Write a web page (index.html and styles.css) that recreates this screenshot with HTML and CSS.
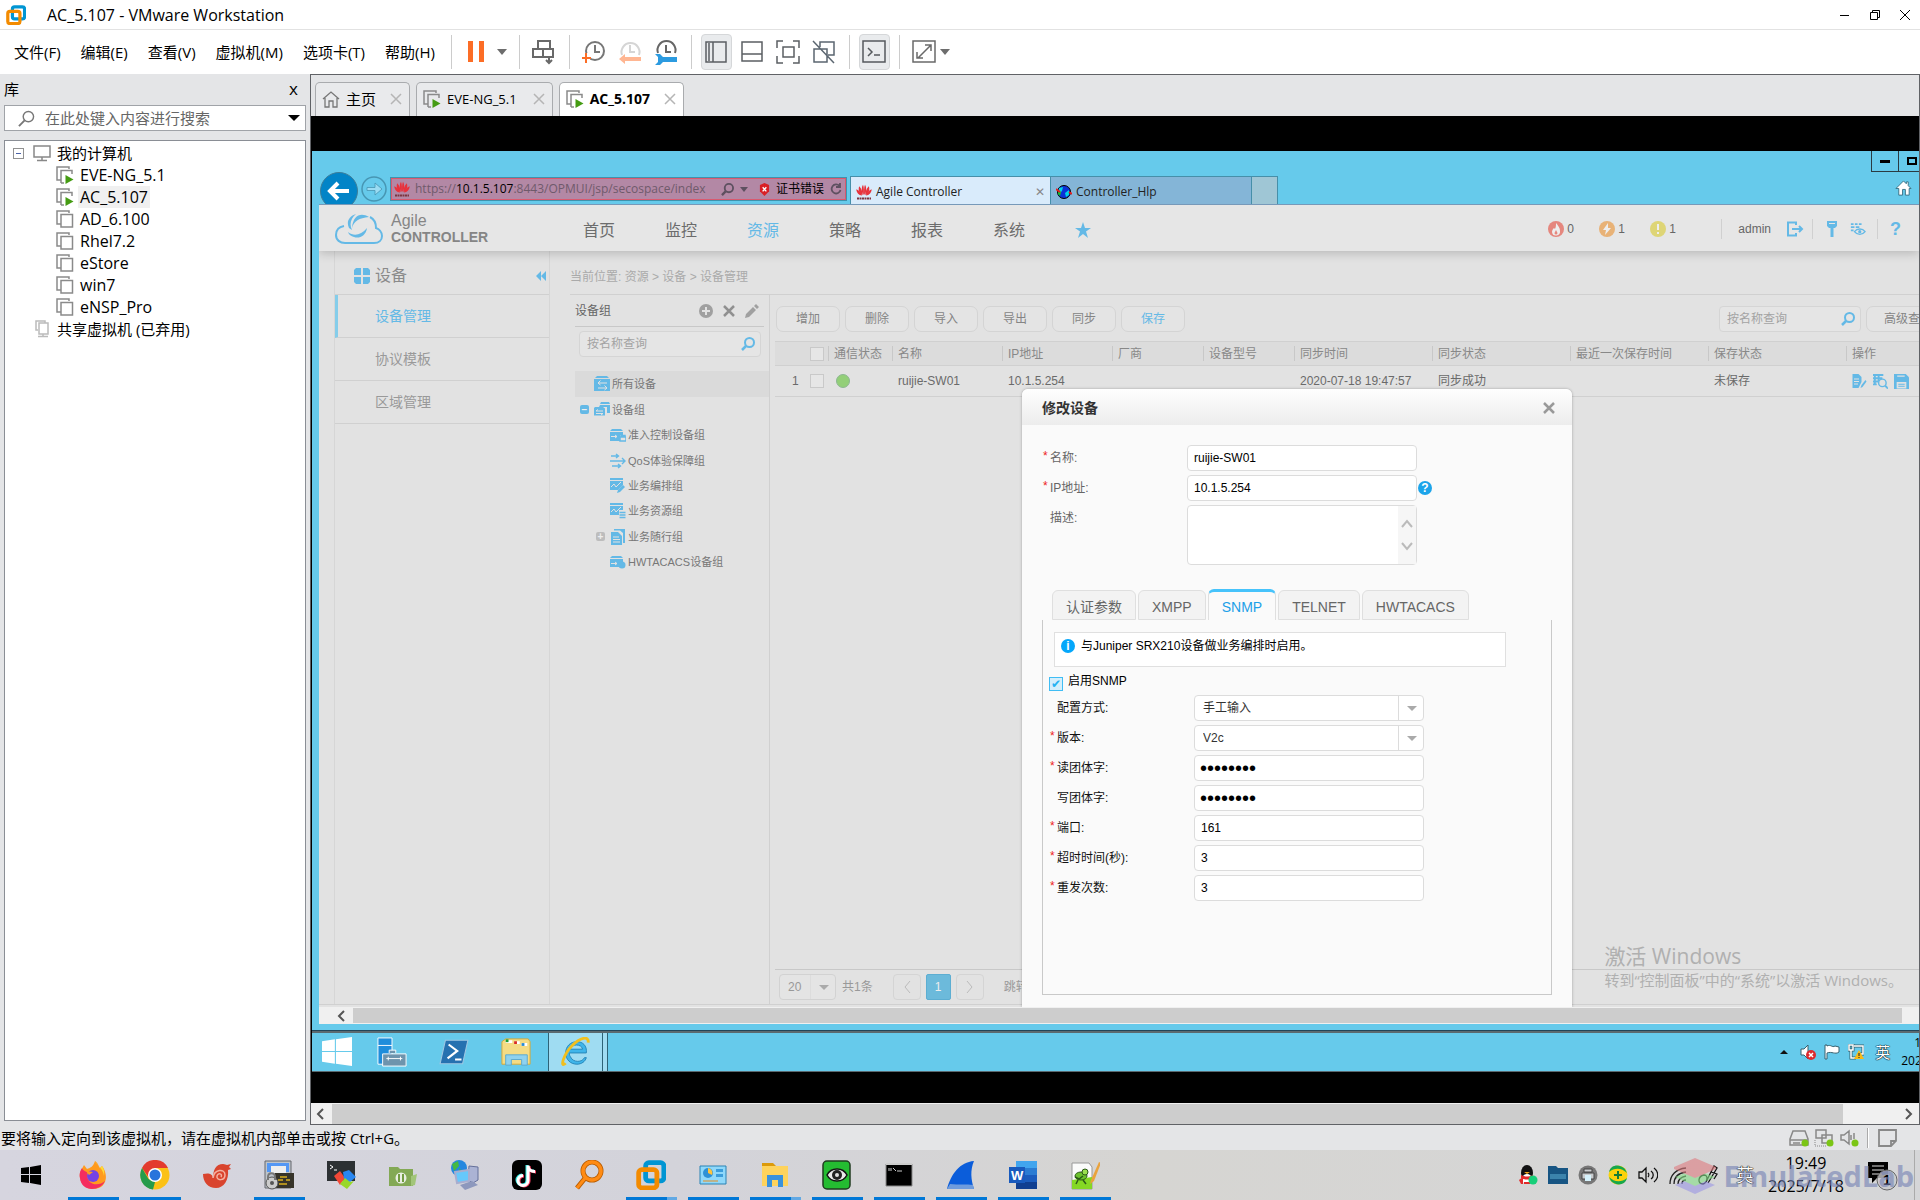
FILE: index.html
```
<!DOCTYPE html>
<html lang="zh-CN">
<head>
    <meta charset="utf-8">
    <title>AC_5.107 - VMware Workstation</title>
    <link rel="stylesheet" href="styles.css">
</head>
<body>

<!-- shared icons -->
<svg class="sprite" aria-hidden="true">
    <symbol id="vm" viewBox="0 0 18 18"><path d="M5 14H1V1h12v2" fill="none" stroke="#8a8a8a" stroke-width="1.5"/><rect x="5" y="4.500" width="11.500" height="12.500" fill="#fff" stroke="#8a8a8a" stroke-width="1.500"/></symbol>
    <symbol id="vm-on" viewBox="0 0 18 18"><path d="M5 14H1V1h12v2M5 17V4.500h11V8M5 17h3" fill="none" stroke="#8a8a8a" stroke-width="1.5"/><path d="M9.500 9v9l8-4.500z" fill="#459c13"/></symbol>
    <symbol id="vmware" viewBox="0 0 28 28"><rect x="9" y="2.500" width="17" height="17" rx="3" fill="none" stroke="#0095d3" stroke-width="4.500"/><rect x="2.500" y="9" width="17" height="17" rx="3" fill="none" stroke="#f38b00" stroke-width="4.500"/></symbol>
    <symbol id="search" viewBox="0 0 14 14"><circle cx="8.500" cy="5.500" r="4.500" fill="none" stroke="currentColor" stroke-width="2"/><path d="M5 9l-4 4" stroke="currentColor" stroke-width="2.500"/></symbol>
    <symbol id="huawei" viewBox="0 0 16 16"><g fill="#e8323c"><path d="M7.700 11C5 8 5.500 3 7 .8 8 3 8.200 8 7.700 11zM8.300 11C11 8 10.500 3 9 .8 8 3 7.800 8 8.300 11z"/><path d="M6.800 11C3 9 2 5.500 3.200 2.200 5.300 4 6.700 8 6.800 11zM9.200 11C13 9 14 5.500 12.800 2.200 10.700 4 9.300 8 9.200 11z"/><path d="M6.200 11.500C2.500 11.500.5 8.500.3 5.300 3 6 5.500 9 6.200 11.500zM9.800 11.500c3.700 0 5.700-3 5.900-6.200C13 6 10.500 9 9.800 11.500z"/></g><path d="M1 14.500h14" stroke="#7d3440" stroke-width="2" stroke-dasharray="2 .5"/></symbol>
    <symbol id="dev" viewBox="0 0 16 16"><path d="M3 0h10l2 2H1z" fill="#64b9e6"/><path d="M0 3h16v12H0z" fill="#64b9e6"/><path d="M13 7H4l2.500-2.500M4 7l2.500 2M4 12h9l-2.500-2.500M13 12l-2.500 2" stroke="#e2e2e2" fill="none"/></symbol>
    <symbol id="devs" viewBox="0 0 16 16"><path d="M7 0h8l1 2H6zM6 3h10v8h-3V5H5z" fill="#64b9e6"/><path d="M1 5h8l2 1.500v7H0V6z" fill="#64b9e6"/><path d="M9 9H2l2-1.500M2 11.500h7L7 13" stroke="#e2e2e2" fill="none"/></symbol>
    <symbol id="lock" viewBox="0 0 16 16"><path d="M2 2h9l2 2H0zM0 5h13v3h-3v6H0z" fill="#64b9e6"/><path d="M1 9.500h6L5 8M7 9.500L5 11" stroke="#e2e2e2" fill="none"/><path d="M11 10V8.500h4V10M10 10h6v4h-6z" fill="none" stroke="#64b9e6" stroke-width="1.500"/></symbol>
    <symbol id="qos" viewBox="0 0 16 16"><path d="M1 3h7M6 1l2.500 2L6 5M0 8h15M12 5l3 3-3 3M2 13h8M8 11l2.500 2L8 15" stroke="#64b9e6" stroke-width="1.400" fill="none"/></symbol>
    <symbol id="edit-chart" viewBox="0 0 16 16"><path d="M0 0h13v2H0zM0 3h13v4l-5 5H0z" fill="#64b9e6"/><path d="M1 9l3-3 2 3 5-5" stroke="#e2e2e2" fill="none"/><path d="M7 15l1-3 5-5 2 2-5 5z" fill="#64b9e6"/></symbol>
    <symbol id="db-chart" viewBox="0 0 16 16"><path d="M0 0h13v2H0zM0 3h13v4H9v5H0z" fill="#64b9e6"/><path d="M1 9l3-3 2 3 5-5" stroke="#e2e2e2" fill="none"/><path d="M9.500 9.500h6M9.500 12h6M9.500 14.500h6" stroke="#64b9e6" stroke-width="1.500"/></symbol>
    <symbol id="docs" viewBox="0 0 16 16"><path d="M4 0h11v14h-2V4L10 1.500H4z" fill="#64b9e6"/><path d="M1 3h7l4 4v9H1z" fill="#64b9e6"/><path d="M3 8h6M3 10.500h7M3 13h7" stroke="#e2e2e2"/></symbol>
    <symbol id="tacacs" viewBox="0 0 16 16"><path d="M2 2h9l2 2H0zM0 5h13v3a4 4 0 0 0-4 5H0z" fill="#64b9e6"/><path d="M1 9.500h6L5 8M7 9.500L5 11" stroke="#e2e2e2" fill="none"/><circle cx="12" cy="11" r="3.500" fill="#64b9e6"/></symbol>
</svg>

<header class="title-bar">
    <svg class="app-logo"><use href="#vmware"/></svg>
    <h1 class="app-title">AC_5.107 - VMware Workstation</h1>
    <div class="window-buttons">
        <button aria-label="最小化"><svg viewBox="0 0 12 12"><path d="M1 6.500h9"/></svg></button>
        <button aria-label="还原"><svg viewBox="0 0 12 12"><path d="M1.500 3.500h7v7h-7zM3.500 3.500v-2h7v7h-2"/></svg></button>
        <button aria-label="关闭"><svg viewBox="0 0 12 12"><path d="M1 1l10 10M11 1L1 11"/></svg></button>
    </div>
</header>

<nav class="menu-bar">
    <button class="menu">文件(F)</button>
    <button class="menu">编辑(E)</button>
    <button class="menu">查看(V)</button>
    <button class="menu">虚拟机(M)</button>
    <button class="menu">选项卡(T)</button>
    <button class="menu">帮助(H)</button>
    <span class="bar-line"></span>
    <div class="tool-group pause">
        <button aria-label="挂起"><svg viewBox="0 0 26 26"><path d="M5 2h5v21H5zM16 2h5v21h-5z" fill="#fc6d26"/></svg></button>
        <span class="caret"></span>
    </div>
    <span class="bar-line"></span>
    <div class="tool-group">
        <button aria-label="发送按键"><svg viewBox="0 0 26 26"><path d="M7 2h12v8H7zM2 10h10v8H2zM12 10h10v8H12zM18 18v6M15 21l3 3 3-3" fill="none" stroke="#696969" stroke-width="2"/></svg></button>
    </div>
    <span class="bar-line"></span>
    <div class="tool-group snaps">
        <button aria-label="拍摄快照"><svg viewBox="0 0 26 26"><circle cx="14" cy="12" r="9" fill="none" stroke="#777" stroke-width="2"/><path d="M14 6v7h5" fill="none" stroke="#777" stroke-width="2"/><path d="M0 14h9v10H0z" fill="#fff"/><path d="M5 14v10M1 19h9" stroke="#fc6d26" stroke-width="2"/></svg></button>
        <button aria-label="恢复快照"><svg viewBox="0 0 26 26"><path d="M5 16a9 9 0 1 1 17 0M13 6v7h5" fill="none" stroke="#d5d5d5" stroke-width="2"/><path d="M2 20l6-5v3h16v4H8v3z" fill="#ffb692"/></svg></button>
        <button aria-label="管理快照"><svg viewBox="0 0 26 26"><path d="M5 14a9 9 0 1 1 17 0M13 6v7h5" fill="none" stroke="#666" stroke-width="2"/><path d="M2 15h5l3 3h14v5H10l-3 3H2l3-3v-5z" fill="#2c9be0"/></svg></button>
    </div>
    <span class="bar-line"></span>
    <div class="tool-group views">
        <button class="pressed" aria-label="显示库"><svg viewBox="0 0 26 26"><path d="M3 3h20v20H3zM10 3v20M6 4v18" fill="none" stroke="#5b5f63" stroke-width="1.500"/></svg></button>
        <button aria-label="缩略图栏"><svg viewBox="0 0 26 26"><path d="M3 3h20v19H3zM3 15h20" fill="none" stroke="#5b5f63" stroke-width="1.500"/></svg></button>
        <button aria-label="全屏"><svg viewBox="0 0 26 26"><path d="M8 8h11v10H8zM2 9V2h6M18 2h6v7M24 17v7h-6M8 24H2v-7" fill="none" stroke="#5b5f63" stroke-width="1.500"/></svg></button>
        <button aria-label="Unity"><svg viewBox="0 0 26 26"><path d="M9 8V3h14v13h-6M3 10h13v13H3zM2 2l21 22" fill="none" stroke="#5b6670" stroke-width="1.500"/></svg></button>
    </div>
    <span class="bar-line"></span>
    <div class="tool-group">
        <button class="pressed" aria-label="控制台"><svg viewBox="0 0 26 26"><path d="M2 2h22v21H2zM7 9l4 4-4 4M13 16h6" fill="none" stroke="#55595d" stroke-width="1.500"/></svg></button>
    </div>
    <span class="bar-line"></span>
    <div class="tool-group">
        <button aria-label="拉伸"><svg viewBox="0 0 26 26"><path d="M2 2h22v21H2zM7 19L20 6M14 6h6v6M6 13v6h6" fill="none" stroke="#696969" stroke-width="1.500"/></svg></button>
        <span class="caret"></span>
    </div>
</nav>

<main class="workspace">
    <aside class="library">
        <div class="library-head"><h2>库</h2><button aria-label="关闭">x</button></div>
        <div class="library-search">
            <svg class="search-icon" viewBox="0 0 18 18"><circle cx="11" cy="7" r="5.500" fill="none" stroke="#777" stroke-width="1.500"/><path d="M7 11l-6 6" stroke="#777" stroke-width="2"/></svg>
            <input type="text" aria-label="搜索" placeholder="在此处键入内容进行搜索">
            <span class="caret black"></span>
        </div>
        <ul class="vm-tree">
            <li class="root"><span class="minus-box"></span><svg viewBox="0 0 18 18"><path d="M1 2h16v11H1zM9 13v3M4 16.500h10" fill="none" stroke="#888" stroke-width="1.500"/></svg><span>我的计算机</span></li>
            <li><svg><use href="#vm-on"/></svg><span>EVE-NG_5.1</span></li>
            <li class="selected"><svg><use href="#vm-on"/></svg><span>AC_5.107</span></li>
            <li><svg><use href="#vm"/></svg><span>AD_6.100</span></li>
            <li><svg><use href="#vm"/></svg><span>Rhel7.2</span></li>
            <li><svg><use href="#vm"/></svg><span>eStore</span></li>
            <li><svg><use href="#vm"/></svg><span>win7</span></li>
            <li><svg><use href="#vm"/></svg><span>eNSP_Pro</span></li>
            <li class="shared"><svg viewBox="0 0 18 18"><path d="M5 10H3V1h9v2M6 3h9v11H6zM10 14v2M5 16.500h10" fill="none" stroke="#bbb" stroke-width="1.500"/></svg><span>共享虚拟机 (已弃用)</span></li>
        </ul>
    </aside>

    <section class="console">
        <div class="vm-tabs">
            <div class="vm-tab home"><svg viewBox="0 0 18 18"><path d="M1 9l8-7 8 7M3 8v9h4v-6h4v6h4V8" fill="none" stroke="#777" stroke-width="1.300"/></svg><span>主页</span><button aria-label="关闭"><svg class="x" viewBox="0 0 12 12"><path d="M1 1l10 10M11 1L1 11"/></svg></button></div>
            <div class="vm-tab"><svg><use href="#vm-on"/></svg><span>EVE-NG_5.1</span><button aria-label="关闭"><svg class="x" viewBox="0 0 12 12"><path d="M1 1l10 10M11 1L1 11"/></svg></button></div>
            <div class="vm-tab active"><svg><use href="#vm-on"/></svg><span>AC_5.107</span><button aria-label="关闭"><svg class="x" viewBox="0 0 12 12"><path d="M1 1l10 10M11 1L1 11"/></svg></button></div>
        </div>

        <div class="guest">
            <div class="ie">
                <div class="ie-buttons">
                    <button aria-label="最小化"><span class="ie-min"></span></button>
                    <button aria-label="最大化"><span class="ie-max"></span></button>
                </div>
                <div class="ie-bar">
                    <button class="ie-back" aria-label="后退"><svg viewBox="0 0 38 38"><circle cx="19" cy="19" r="18.500" fill="#0284c7" stroke="#3d7d99"/><path d="M29 19H11M18 11l-8 8 8 8" fill="none" stroke="#fff" stroke-width="4"/></svg></button>
                    <button class="ie-forward" aria-label="前进"><svg viewBox="0 0 26 26"><circle cx="13" cy="13" r="12" fill="none" stroke="#4796b3" stroke-width="1.500"/><path d="M6 11.500h8V7l7 6-7 6v-4.500H6z" fill="#9adcf3" stroke="#4796b3" stroke-width=".8"/></svg></button>
                    <div class="address">
                        <svg class="fav"><use href="#huawei"/></svg>
                        <span class="url">https://<b>10.1.5.107</b>:8443/OPMUI/jsp/secospace/index</span>
                        <svg class="address-search"><use href="#search"/></svg>
                        <span class="caret small"></span>
                        <svg class="shield" viewBox="0 0 12 14"><path d="M1 2l5-2 5 2v7l-5 5-5-5z" fill="#d91f26"/><path d="M4 4.500l4 4.500M8 4.500L4 9" stroke="#fff" stroke-width="1.500"/></svg>
                        <span class="cert">证书错误</span>
                        <svg class="reload" viewBox="0 0 12 12"><path d="M9.500 3A4.500 4.500 0 1 0 10.500 7M10 0v4H6" fill="none" stroke="#5e5060" stroke-width="1.800"/></svg>
                    </div>
                    <div class="ie-tab active"><svg class="fav"><use href="#huawei"/></svg><span>Agile Controller</span><button aria-label="关闭">✕</button></div>
                    <div class="ie-tab"><svg class="fav" viewBox="0 0 16 16"><circle cx="8" cy="8" r="6.500" fill="#0a32d8" stroke="#000"/><path d="M3 4l4-1-1 4-3 3zM9 9l4-3v5l-3 2z" fill="#00d4e8"/><path d="M2 6l3 2-1 4-2-2z" fill="#0bc22c"/><path d="M0 5l4 3M13 8l3 2" stroke="#e41d1d" stroke-width="2"/></svg><span>Controller_Hlp</span></div>
                    <div class="ie-newtab"></div>
                    <svg class="ie-home" viewBox="0 0 18 18"><path d="M1 9l8-8 3 3V2h2v4l3 3h-2v7h-4v-6H8v6H4V9z" fill="#fff" stroke="#3a7286"/></svg>
                </div>

                <div class="page">
                    <header class="ac-header">
                        <svg class="cloud" viewBox="0 0 48 32"><path d="M9 13C3 14 1 18 1 22c0 5 4 8 9 8h29c5 0 8-3 8-7s-3-7-6-8c0-5-2-9-6-11" fill="none" stroke="#64b9e6" stroke-width="2"/><path d="M34 4C26-1 18 2 17 15 19 8 24 5 34 4zM21 1c-7 2-10 8-7 14l3 2C14 11 16 5 21 1zM32 15c-1 8-8 11-13 9-3-1-5-2-6-5 6 5 13 3 19-4z" fill="#64b9e6"/></svg>
                        <div class="brand"><span class="brand-top">Agile</span><strong>CONTROLLER</strong></div>
                        <nav class="ac-nav">
                            <a href="#">首页</a><a href="#">监控</a><a href="#" class="on">资源</a><a href="#">策略</a><a href="#">报表</a><a href="#">系统</a>
                            <a href="#" aria-label="收藏"><svg viewBox="0 0 16 16"><path d="M8 0l2 6h6l-5 3.500L13 16l-5-4-5 4 2-6.500L0 6h6z" fill="#64b9e6"/></svg></a>
                        </nav>
                        <div class="alarms">
                            <span><svg viewBox="0 0 16 16"><circle cx="8" cy="8" r="8" fill="#e5877e"/><path d="M8 2c3 4 4 5 4 8a4 4 0 0 1-8 1c0-2 1-3 2-4l1 1c1-2 1-4 1-6z" fill="#eee"/><path d="M8 9l1.500 3a1.500 1.500 0 0 1-3 0z" fill="#e5877e"/></svg>0</span>
                            <span><svg viewBox="0 0 16 16"><circle cx="8" cy="8" r="8" fill="#e8b277"/><path d="M9 2L4 9h3l-1 5 6-7H9z" fill="#eee"/></svg>1</span>
                            <span><svg viewBox="0 0 16 16"><circle cx="8" cy="8" r="8" fill="#ded576"/><path d="M8 3v6M8 11v2" stroke="#eee" stroke-width="2"/></svg>1</span>
                        </div>
                        <div class="user">
                            <span>admin</span>
                            <svg viewBox="0 0 18 16"><path d="M10 4V1.500H2v13h8V12M6 8h10M13 5l3 3-3 3" fill="none" stroke="#64b9e6" stroke-width="2"/></svg>
                        </div>
                        <div class="header-tools">
                            <svg viewBox="0 0 16 16"><path d="M3 0h10v5l-2 2H9.500v9h-3V7H5L3 5z" fill="#64b9e6"/><path d="M5 2.500h6" stroke="#e6e6e6"/></svg>
                            <svg viewBox="0 0 18 16"><path d="M1 2.500h3M5.500 2.500h3M10 2.500h3M1 6h4M6.500 6h4M1 9.500h3" stroke="#64b9e6" stroke-width="2"/><path d="M5 11c3-4 9-4 12 0-3 4-9 4-12 0z" fill="none" stroke="#64b9e6" stroke-width="1.500"/><circle cx="11" cy="11" r="1.800" fill="#64b9e6"/></svg>
                        </div>
                        <div class="help">?</div>
                    </header>

                    <div class="ac-body">
                        <aside class="ac-side">
                            <div class="side-title"><svg viewBox="0 0 16 16"><path d="M0 2l2-2h5v7H0zM9 0h5l2 2v5H9zM0 9h7v7H2l-2-2zM9 9h7v5l-2 2H9z" fill="#64b9e6"/></svg><span>设备</span><svg class="fold" viewBox="0 0 10 10"><path d="M5 0v10L0 5zM10 0v10L5 5z" fill="#64b9e6"/></svg></div>
                            <a href="#" class="on">设备管理</a>
                            <a href="#">协议模板</a>
                            <a href="#">区域管理</a>
                        </aside>
                        <div class="ac-content">
                            <div class="crumbs">当前位置: 资源 &gt; 设备 &gt; 设备管理</div>
                            <div class="split">
                                <section class="groups">
                                    <div class="groups-title"><span>设备组</span>
                                        <svg viewBox="0 0 14 14"><circle cx="7" cy="7" r="7" fill="#a0a0a0"/><path d="M7 3v8M3 7h8" stroke="#e2e2e2" stroke-width="2"/></svg>
                                        <svg viewBox="0 0 14 14"><path d="M2 2l10 10M12 2L2 12" stroke="#909090" stroke-width="2.500"/></svg>
                                        <svg viewBox="0 0 14 14"><path d="M0 14l1-4 7-7 3 3-7 7zM9 2l2-2 3 3-2 2z" fill="#a0a0a0"/></svg>
                                    </div>
                                    <div class="find"><input type="text" aria-label="按名称查询" placeholder="按名称查询"><svg><use href="#search"/></svg></div>
                                    <div class="all-devices"><svg><use href="#dev"/></svg>所有设备</div>
                                    <ul class="group-tree">
                                        <li class="top"><i class="fold-box">−</i><svg><use href="#devs"/></svg>设备组</li>
                                        <li><svg><use href="#lock"/></svg>准入控制设备组</li>
                                        <li><svg><use href="#qos"/></svg>QoS体验保障组</li>
                                        <li><svg><use href="#edit-chart"/></svg>业务编排组</li>
                                        <li><svg><use href="#db-chart"/></svg>业务资源组</li>
                                        <li class="closed"><i class="fold-box">+</i><svg><use href="#docs"/></svg>业务随行组</li>
                                        <li><svg><use href="#tacacs"/></svg>HWTACACS设备组</li>
                                    </ul>
                                </section>
                                <section class="devices">
                                    <div class="device-tools">
                                        <button>增加</button><button>删除</button><button>导入</button><button>导出</button><button>同步</button><button class="on">保存</button>
                                        <div class="find"><input type="text" aria-label="按名称查询设备" placeholder="按名称查询"><svg><use href="#search"/></svg></div>
                                        <button class="advanced">高级查询</button>
                                    </div>
                                    <table class="device-table">
                                        <thead>
                                            <tr><th class="c-num"></th><th class="c-check"><input type="checkbox" aria-label="全选"></th><th class="c-state">通信状态</th><th class="c-name">名称</th><th class="c-name">IP地址</th><th class="c-mid">厂商</th><th class="c-mid">设备型号</th><th class="c-wide">同步时间</th><th class="c-wide">同步状态</th><th class="c-wide">最近一次保存时间</th><th class="c-wide">保存状态</th><th>操作</th></tr>
                                        </thead>
                                        <tbody>
                                            <tr><td class="num">1</td><td><input type="checkbox" aria-label="选择 ruijie-SW01"></td><td><span class="online"></span></td><td>ruijie-SW01</td><td>10.1.5.254</td><td></td><td></td><td>2020-07-18 19:47:57</td><td>同步成功</td><td></td><td>未保存</td>
                                                <td><div class="ops">
                                                    <svg viewBox="0 0 14 15"><path d="M0 0h6l3 3v5l-3 6H0z" fill="#64b9e6"/><path d="M1.500 5h5M1.500 7.500h5M1.500 10h4" stroke="#e2e2e2"/><path d="M8 14l1-3 4-5 1 1.500-4 5.500z" fill="#64b9e6"/></svg>
                                                    <svg viewBox="0 0 16 16"><path d="M0 1h11M0 4.500h10M0 8h6M0 11h4M2 0v12M6 0v8" stroke="#64b9e6" stroke-width="2"/><circle cx="10" cy="9.500" r="4" fill="#e2e2e2" stroke="#64b9e6" stroke-width="1.500"/><path d="M13 12.500l3 3" stroke="#64b9e6" stroke-width="2"/></svg>
                                                    <svg viewBox="0 0 14 14"><path d="M0 0h11l3 3v11H0z" fill="#64b9e6"/><path d="M3 2h7M3 8h8v5H3z" stroke="#e2e2e2" fill="#e2e2e2"/><path d="M4 9.500h6M4 11.500h6" stroke="#64b9e6"/></svg>
                                                </div></td></tr>
                                        </tbody>
                                    </table>
                                    <footer class="pager">
                                        <div class="pick size"><select aria-label="每页条数"><option>20</option></select></div>
                                        <span class="total">共1条</span>
                                        <button class="arrow" aria-label="上一页"><svg viewBox="0 0 8 14"><path d="M7 1L2 7l5 6"/></svg></button>
                                        <button class="current">1</button>
                                        <button class="arrow" aria-label="下一页"><svg viewBox="0 0 8 14"><path d="M1 1l5 6-5 6"/></svg></button>
                                        <span class="jump">跳转</span>
                                    </footer>
                                </section>
                            </div>
                        </div>
                    </div>

                    <div class="dialog" role="dialog" aria-labelledby="dialog-title">
                        <div class="dialog-head"><h2 id="dialog-title">修改设备</h2><button aria-label="关闭"><svg viewBox="0 0 12 12"><path d="M1 1l10 10M11 1L1 11" stroke="#999" stroke-width="2.500"/></svg></button></div>
                        <div class="fields base">
                            <label for="name"><em>*</em>名称:</label><div><input id="name" type="text" value="ruijie-SW01"></div>
                            <label for="ip"><em>*</em>IP地址:</label><div><input id="ip" type="text" value="10.1.5.254"><span class="hint">?</span></div>
                            <label for="desc"><em></em>描述:</label>
                            <div class="area"><textarea id="desc"></textarea><div class="area-scroll"><svg viewBox="0 0 12 9"><path d="M1 8l5-6 5 6"/></svg><svg viewBox="0 0 12 9"><path d="M1 1l5 6 5-6"/></svg></div></div>
                        </div>
                        <div class="dialog-tabs">
                            <button>认证参数</button><button>XMPP</button><button class="on">SNMP</button><button>TELNET</button><button>HWTACACS</button>
                        </div>
                        <div class="tab-panel">
                            <div class="notice"><span class="info">i</span>与Juniper SRX210设备做业务编排时启用。</div>
                            <div class="enable"><input id="snmp" type="checkbox" checked><label for="snmp">启用SNMP</label></div>
                            <div class="fields snmp">
                                <label for="mode"><em></em>配置方式:</label><div class="pick"><select id="mode"><option>手工输入</option></select></div>
                                <label for="ver"><em>*</em>版本:</label><div class="pick"><select id="ver"><option>V2c</option></select></div>
                                <label for="read"><em>*</em>读团体字:</label><div><input id="read" type="password" value="abcdefgh"></div>
                                <label for="write"><em></em>写团体字:</label><div><input id="write" type="password" value="abcdefgh"></div>
                                <label for="port"><em>*</em>端口:</label><div><input id="port" type="text" value="161"></div>
                                <label for="timeout"><em>*</em>超时时间(秒):</label><div><input id="timeout" type="text" value="3"></div>
                                <label for="retry"><em>*</em>重发次数:</label><div><input id="retry" type="text" value="3"></div>
                            </div>
                        </div>
                    </div>
                    <div class="activate"><div class="activate-big">激活 Windows</div>转到“控制面板”中的“系统”以激活 Windows。</div>
                </div>
                <div class="page-scroll"><svg viewBox="0 0 8 12"><path d="M7 1L2 6l5 5"/></svg><span class="thumb"></span></div>
            </div>

            <div class="guest-taskbar">
                <button aria-label="开始"><svg viewBox="0 0 28 28"><path d="M0 4l12-2v11H0zM13 2l15-2v13H13zM0 14h12v11L0 23zM13 14h15v13l-15-2z" fill="#fff"/></svg></button>
                <button aria-label="服务器管理器"><svg viewBox="0 0 32 32"><path d="M1 1h15v28H1z" fill="#1f8ddb" stroke="#fff"/><path d="M1 9h15" stroke="#fff"/><path d="M13 17v-3h7v3M6 18h25v13H6z" fill="#6e94ad" stroke="#fff"/><path d="M10 23h17M12 21v4M25 21v4" stroke="#fff"/></svg></button>
                <button aria-label="PowerShell"><svg viewBox="0 0 28 24"><path d="M6 1h21l-5 22H1z" fill="#2671b0" stroke="#9dc6e2"/><path d="M9 5l8 6-9 7M15 19h6" fill="none" stroke="#fff" stroke-width="2"/></svg></button>
                <button aria-label="资源管理器"><svg viewBox="0 0 32 30"><path d="M1 4l4-3h24l2 3v24H1z" fill="#f4dc85" stroke="#d6a935"/><path d="M5 4h7M14 5h6M22 7h6" stroke="#fff" stroke-width="3"/><path d="M5 3h3" stroke="#1d9b30" stroke-width="3"/><path d="M14 5h3" stroke="#d82b23" stroke-width="3"/><path d="M22 7h3" stroke="#268ad6" stroke-width="3"/><path d="M5 29V18h23v11h-6v-6H11v6z" fill="#8fd2ef" stroke="#5aa9cf"/></svg></button>
                <button class="running" aria-label="Internet Explorer"><svg viewBox="0 0 32 32"><path d="M25 22c-2 5-12 6-15-1-1-1-1-3-1-4h18C28 9 23 5 17 5 10 5 5 10 5 17s5 12 12 12c5 0 9-3 10-7zM10 13c1-6 12-6 13 0z" fill="#3fb5ea" stroke="#2384b8" fill-rule="evenodd"/><path d="M5 28C-2 34 3 18 12 9 20 1 30-2 29 6" fill="none" stroke="#f1bf1e" stroke-width="3"/></svg></button>
                <div class="guest-tray">
                    <svg viewBox="0 0 16 16"><path d="M4 10l4-4 4 4z" fill="#111"/></svg>
                    <svg viewBox="0 0 16 16"><path d="M1 5h3l4-4v14l-4-4H1z" fill="#fff" stroke="#36606e"/><circle cx="11" cy="11" r="5" fill="#dc2b2f"/><path d="M9 9l4 4M13 9l-4 4" stroke="#fff" stroke-width="1.500"/></svg>
                    <svg viewBox="0 0 16 16"><path d="M1 15V1h2v1c4-2 5 2 8 0l4 1v5c-4 3-7-1-12 1v6z" fill="#fff" stroke="#36606e"/></svg>
                    <svg viewBox="0 0 16 16"><path d="M1 1h4v5H1zM3 6v8h5M6 2h9v8h-5" fill="none" stroke="#36606e" stroke-width="3"/><path d="M1 1h4v5H1zM3 6v8h5M6 2h9v8h-5" fill="none" stroke="#fff" stroke-width="1.500"/><path d="M11 6l5 9H6z" fill="#f8b916"/><path d="M11 9v3M11 13v1" stroke="#222"/></svg>
                    <span class="ime">英</span>
                    <span class="guest-date">19:49<br>2025/7/18</span>
                </div>
            </div>
        </div>
        <div class="outer-scroll"><svg viewBox="0 0 8 12"><path d="M7 1L2 6l5 5"/></svg><span class="thumb"></span><svg viewBox="0 0 8 12"><path d="M1 1l5 5-5 5"/></svg></div>
    </section>
</main>

<footer class="status-bar">
    <span>要将输入定向到该虚拟机，请在虚拟机内部单击或按 Ctrl+G。</span>
    <div class="status-icons">
        <svg viewBox="0 0 20 18"><path d="M1 10l3-8h12l3 8v6H1zM1 11h18M4 14h7" fill="none" stroke="#888" stroke-width="1.500"/><circle cx="16" cy="14" r="3.500" fill="#7bc515"/></svg>
        <svg viewBox="0 0 20 18"><path d="M2 1h10v8H2zM8 6h10v8H8z" fill="none" stroke="#888" stroke-width="1.500"/><path d="M1 11v6h12" fill="none" stroke="#888" stroke-dasharray="1 1"/><circle cx="16" cy="14" r="3.500" fill="#7bc515"/></svg>
        <svg viewBox="0 0 20 18"><path d="M2 6h3l5-4v13l-5-4H2zM12 6v5M15 4v6" fill="none" stroke="#888" stroke-width="1.500"/><circle cx="16" cy="14" r="3.500" fill="#7bc515"/></svg>
        <span class="status-line"></span>
        <svg viewBox="0 0 20 18"><path d="M1 1h17v11l-5 5H1zM18 12h-5v5" fill="none" stroke="#888" stroke-width="1.800"/></svg>
    </div>
</footer>

<footer class="taskbar">
    <div class="tasks">
        <button class="task" aria-label="开始"><svg viewBox="0 0 30 30"><path d="M5 8l8-1v7H5zM14 7l11-2v9H14zM5 15h8v8l-8-1zM14 15h11v10l-11-2z" fill="#000"/></svg></button>
        <button class="task open" aria-label="Firefox"><svg viewBox="0 0 30 30"><path d="M2 18C1 12 4 9 6 5l3 4c3-1 6-2 8-8 3 2 3 4 5 7l2-2c7 9 5 23-9 23C8 29 3 24 2 18z" fill="#ff9a1f"/><path d="M2 18c1 14 20 14 25 3-5 5-19 6-18-9-4-1-5-4-5-4-2 3-3 7-2 10z" fill="#f52d5f"/><path d="M17 1c2 5 8 7 9 15 1-6-1-9-2-10l-2 2z" fill="#ffda35"/><circle cx="15" cy="16" r="6" fill="#7542e5"/><path d="M8 11l7 1-4 3z" fill="#ff9a1f"/></svg></button>
        <button class="task open" aria-label="Chrome"><svg viewBox="0 0 30 30"><circle cx="15" cy="15" r="14.500" fill="#fbc116"/><path d="M2 8a14.500 14.500 0 0 1 26 0H15L9 18z" fill="#e33b2e"/><path d="M2 8l6.500 11L15 22l-2 7.500A14.500 14.500 0 0 1 2 8z" fill="#269b4b"/><circle cx="15" cy="15" r="7" fill="#fff"/><circle cx="15" cy="15" r="5.500" fill="#2874dc"/></svg></button>
        <button class="task" aria-label="Snail"><svg viewBox="0 0 30 30"><path d="M1 14c5-1 9-1 10 4 0-8 3-14 10-14 2 0 3 1 4 1l4-1-2 3 2 2-3 1c1 10-4 18-12 18C6 28 1 22 1 14z" fill="#d9442e"/><path d="M11 18c1-9 12-10 12-3 0 6-9 6-8 1 1-4 6-2 4 1" fill="none" stroke="#f4b0a0" stroke-width="1.500"/></svg></button>
        <button class="task open" aria-label="SecureCRT"><svg viewBox="0 0 30 30"><path d="M1 1h26v27H1z" fill="#bec4cb" stroke="#64676c"/><path d="M3 3h22v9H3z" fill="#5497f4"/><path d="M7 6h15v7H7z" fill="#eee"/><path d="M11 13h19v15H11z" fill="#37342a"/><path d="M16 17h7M14 20h5M22 20h4M15 24h8" stroke="#d9ae1f" stroke-width="1.500"/><circle cx="8" cy="23" r="6" fill="#ccc" stroke="#555"/><path d="M4 20v-3c0-5 7-5 7 0v3" fill="none" stroke="#777" stroke-width="2"/><circle cx="8" cy="23" r="2" fill="#555"/></svg></button>
        <button class="task" aria-label="MobaXterm"><svg viewBox="0 0 30 30"><path d="M1 1h28v20H1z" fill="#2c3033"/><path d="M4 5l3 2-3 2M8 10h3" fill="none" stroke="#fff"/><path d="M8 16l6-5 5 7-5 7z" fill="#f34837"/><path d="M17 12l6-2 7 7-6 5-6-3z" fill="#2986f0"/><path d="M14 24l5-6 5 4 4-1-7 8z" fill="#98d72a"/></svg></button>
        <button class="task" aria-label="Folder"><svg viewBox="0 0 30 30"><path d="M1 7h9l2 2h13v17H1z" fill="#83a955"/><path d="M23 16l6-2-2 11-4 1z" fill="#a2c579"/><circle cx="13" cy="18" r="5.500" fill="#e8eee2"/><path d="M11 22v-8M15 14v8" stroke="#729c42" stroke-width="2"/></svg></button>
        <button class="task" aria-label="Network"><svg viewBox="0 0 30 30"><circle cx="9" cy="8" r="8" fill="#2587df"/><path d="M2 4l6-3 1 5-5 5zM9 8l4 4-4 4z" fill="#45b943"/><path d="M19 6l9 1v13l-5 3-5-3z" fill="#abb3d4" stroke="#65709b"/><path d="M5 12l14-2v11l-12 2z" fill="#66c8fb" stroke="#a8adcf" stroke-width="2"/><path d="M10 25l12-4 6 4-13 5z" fill="#8d98bd"/></svg></button>
        <button class="task" aria-label="TikTok"><svg viewBox="0 0 30 30"><rect width="30" height="30" rx="6" fill="#000"/><g fill="none" stroke-width="3"><path d="M15 5v15a5 5 0 1 1-5-5M15 5c0 4 3 6 7 6" stroke="#35ece6"/><path d="M17 6v15a5 5 0 1 1-5-5M17 6c0 4 3 6 7 6" stroke="#fd3e63"/><path d="M16 5.500v15a5 5 0 1 1-5-5M16 5.500c0 4 3 6 7 6" stroke="#fff"/></g></svg></button>
        <button class="task" aria-label="Everything"><svg viewBox="0 0 30 30"><path d="M12 17L3 28" stroke="#b85c00" stroke-width="5"/><circle cx="18" cy="11" r="9" fill="none" stroke="#b85c00" stroke-width="5"/><path d="M12 17L3 28" stroke="#ff8b13" stroke-width="3"/><circle cx="18" cy="11" r="9" fill="none" stroke="#ff8b13" stroke-width="3.500"/></svg></button>
        <button class="task open many" aria-label="VMware"><svg><use href="#vmware"/></svg></button>
        <button class="task open" aria-label="控制面板"><svg viewBox="0 0 30 30"><path d="M2 6h26v18H2z" fill="#8fd8fa" stroke="#2b83b5"/><circle cx="10" cy="13" r="5" fill="#2e91d6"/><path d="M10 13V8a5 5 0 0 1 4 7z" fill="#ffc33b"/><path d="M18 9h7v3h-7zM18 14h7v3h-7z" fill="#3c9ddb"/><path d="M5 21h15" stroke="#e98d1c"/></svg></button>
        <button class="task open many" aria-label="文件资源管理器"><svg viewBox="0 0 30 30"><path d="M2 3h11l3 3H2z" fill="#dc9a0a"/><path d="M2 6h26v20H2z" fill="#fed35c"/><path d="M7 27V15h16v12h-5v-7h-6v7z" fill="#3a92dc"/></svg></button>
        <button class="task open" aria-label="Eye"><svg viewBox="0 0 30 30"><rect x="1" y="1" width="27" height="28" rx="4" fill="#24bc31" stroke="#203b20" stroke-width="1.500"/><path d="M5 15c4-8 16-8 20 0-4 8-16 8-20 0z" fill="#e9e9e9" stroke="#111" stroke-width="1.500"/><circle cx="15" cy="15" r="5" fill="#222"/><circle cx="15" cy="15" r="2" fill="#ddd"/></svg></button>
        <button class="task open" aria-label="命令提示符"><svg viewBox="0 0 30 30"><path d="M2 4h26v22H2z" fill="#000" stroke="#888"/><path d="M2 4h26" stroke="#ccc" stroke-width="2"/><path d="M5 8v3M7 8v3M9 8l3 3M13 11h5" stroke="#ccc"/></svg></button>
        <button class="task open" aria-label="Wireshark"><svg viewBox="0 0 30 30"><path d="M1 29C5 14 14 2 28 1c-4 9-3 19 0 28z" fill="#0b5dda"/><path d="M1 29l3-5c8 1 17 0 23 1l1 4z" fill="#6f9cdd"/></svg></button>
        <button class="task open" aria-label="Word"><svg viewBox="0 0 30 30"><path d="M8 1h21v28H8z" fill="#1b5cbd"/><path d="M8 1h21v7H8z" fill="#41a5ee"/><path d="M8 8h21v7H8z" fill="#2b7cd3"/><path d="M8 22h21v7H8z" fill="#103f91"/><path d="M1 7h16v16H1z" fill="#185abd"/><text x="3" y="20" class="word-letter">W</text></svg></button>
        <button class="task open" aria-label="Notepad++"><svg viewBox="0 0 30 30"><path d="M2 3h17l3 4v22H2z" fill="#fbfbfb" stroke="#999"/><path d="M2 20l20-3v12H2z" fill="#85d824"/><ellipse cx="11" cy="16" rx="6" ry="4" fill="#6cc22c" stroke="#2c5a17"/><circle cx="15" cy="12" r="3" fill="#9adf4f" stroke="#2c5a17"/><path d="M5 17l4 2 4-3M8 20l-2 4M13 20l3 4" fill="none" stroke="#2c5a17" stroke-width="1.500"/><path d="M29 2l-8 18-1 4 4-3 7-18z" fill="#eaa33c"/></svg></button>
    </div>
    <div class="tray">
        <svg viewBox="0 0 20 20"><ellipse cx="9" cy="8" rx="6" ry="8" fill="#111"/><ellipse cx="9" cy="14" rx="5" ry="5" fill="#fff"/><path d="M3 10c4 2 8 2 12 0v3c-3 2-9 2-12 0zM1 15l4-3v7H3zM6 19h6v-2H6z" fill="#e22b2b"/><path d="M6 7h6l-3 2z" fill="#efa51a"/><circle cx="15" cy="15" r="4.500" fill="#17cf79"/></svg>
        <svg viewBox="0 0 20 20"><path d="M0 1h8l2 2h10v16H0z" fill="#175583"/><path d="M2 9h16v5H2z" fill="#4b97bd" fill-opacity=".7"/></svg>
        <svg viewBox="0 0 20 20"><circle cx="10" cy="10" r="9.500" fill="#777"/><path d="M4 8h12v6H4zM6 4h8v3H6z" fill="#c9ccce" stroke="#444"/><path d="M7 10h6v6H7z" fill="#d5f2fc"/></svg>
        <svg viewBox="0 0 20 20"><circle cx="10" cy="10" r="9.500" fill="#fcd20b"/><path d="M1 7C3-1 12-1 17 4l2 4c-5-5-12-6-18-1zM19 13c-2 8-11 8-16 3l-2-4c5 5 12 6 18 1z" fill="#17a74b"/><path d="M10 6v8M6 10h8" stroke="#177e36" stroke-width="2"/></svg>
        <svg viewBox="0 0 20 20"><path d="M1 7h3l4-4v14l-4-4H1zM10 8c1 1 1 3 0 4M13 6c3 2 3 6 0 8M16 3c5 4 5 10 0 14" fill="none" stroke="#111" stroke-width="1.300"/></svg>
        <svg viewBox="0 0 20 20"><path d="M2 19C2 10 8 4 18 3M6 19c0-7 5-11 12-12M10 19c0-5 3-7 8-8M14 19c0-3 2-4 4-4" fill="none" stroke="#222" stroke-width="1.300"/></svg>
        <svg class="pen" viewBox="0 0 20 20"><path d="M5 19C-1 19 0 11 6 10c5 0 3 8-1 9zM8 17l8-16 3 2-9 15M13 7l6 2-3 5" fill="none" stroke="#111" stroke-width="1.300"/></svg>
        <span class="ime">英</span>
        <div class="clock"><span>19:49</span><span>2025/7/18</span></div>
        <button class="notify" aria-label="通知"><svg viewBox="0 0 32 32"><path d="M1 3h20v16H10l-5 5v-5H1z" fill="#000"/><path d="M5 7h12M5 11h12M5 15h8" stroke="#ddd"/><circle cx="20" cy="21" r="10" fill="#c8c8cc" fill-opacity=".8" stroke="#666"/><text x="16" y="26" class="notify-count">1</text></svg></button>
        <div class="lab-mark">
            <svg viewBox="0 0 44 36"><path d="M2 27l20-8 20 8-20 9z" fill="#9b96e5"/><path d="M2 19l20-8 20 8-20 9z" fill="#86df88"/><path d="M1 9l21-9 21 9v2l-21 9-21-9z" fill="#df7b80"/></svg>
            <span>EmulatedLab</span>
        </div>
    </div>
</footer>

</body>
</html>
```
FILE: styles.css
```
:root {
    --chrome: #e4e5e7;
    --cyan: #66caeb;
    --blue: #64b9e6;
    --page: #e2e2e2;
    --line: #d0d0d0;
    --field-line: #dcdcdc;
    --ui-font: "Open Sans", "Noto Sans CJK SC", sans-serif;
    --page-font: "Liberation Sans", "Noto Sans CJK SC", sans-serif;
}

* {
    box-sizing: border-box;
}

body {
    margin: 0;
    height: 100vh;
    display: flex;
    flex-direction: column;
    overflow: hidden;
    background: var(--chrome);
    color: #000;
    font: 15px/22px var(--ui-font);
}

button {
    padding: 0;
    border: 0;
    background: none;
    color: inherit;
    font: inherit;
}

input, select, textarea {
    font: inherit;
    color: inherit;
    outline: none;
    margin: 0;
}

a {
    color: inherit;
    text-decoration: none;
}

ul {
    list-style: none;
    margin: 0;
    padding: 0;
}

h1, h2 {
    margin: 0;
    font: inherit;
}

svg {
    flex: none;
    display: block;
}

.sprite {
    position: absolute;
    width: 0;
    height: 0;
}

.caret {
    border: 5px solid transparent;
    border-top: 6px solid #6d6d6d;
    border-bottom: 0;
}

.caret.black {
    border-top-color: #000;
    border-left-width: 6px;
    border-right-width: 6px;
}

.caret.small {
    border-width: 5px 4px 0;
    border-top-color: #5e5060;
}

/* Title and menu */
.title-bar {
    flex: none;
    display: flex;
    align-items: center;
    height: 30px;
    padding: 0 9px 0 6px;
    background: #fff;
    border-bottom: 1px solid #e2e2e2;
}

.app-logo {
    width: 20px;
    height: 20px;
}

.app-title {
    margin-left: 21px;
    font-size: 16px;
}

.window-buttons {
    display: flex;
    gap: 18px;
    margin-left: auto;
}

.window-buttons svg {
    width: 12px;
    height: 12px;
    fill: none;
    stroke: #000;
}

.menu-bar {
    flex: none;
    display: flex;
    align-items: center;
    height: 44px;
    padding: 0 0 1px 14px;
    background: #fff;
}

.menu {
    margin-right: 20px;
    white-space: nowrap;
}

.bar-line {
    width: 1px;
    height: 34px;
    background: #ccc;
}

.menu + .bar-line {
    margin-left: -4px;
}

.tool-group {
    display: flex;
    align-items: center;
    padding: 0 9px;
}

.tool-group button {
    display: grid;
    place-items: center;
    width: 31px;
    height: 36px;
    border: 1px solid transparent;
    border-radius: 4px;
}

.tool-group .pressed {
    background: #e9ebed;
    border-color: #d5d7d9;
}

.tool-group svg {
    width: 26px;
    height: 26px;
}

.pause {
    padding-right: 12px;
}

.pause .caret {
    margin-left: 5px;
}

.snaps, .views {
    gap: 5px;
}

.workspace {
    flex: 1;
    min-height: 0;
    display: flex;
}

/* Library */
.library {
    flex: none;
    width: 310px;
    display: flex;
    flex-direction: column;
    padding: 0 4px 4px;
}

.library-head {
    display: flex;
    justify-content: space-between;
    align-items: center;
    height: 31px;
    padding: 0 8px 2px 0;
}

.library-head button {
    font-size: 17px;
}

.library-search {
    display: flex;
    align-items: center;
    height: 26px;
    padding: 0 5px 0 13px;
    background: #fff;
    border: 1px solid #a0a3a8;
}

.library-search input {
    flex: 1;
    min-width: 0;
    margin-left: 10px;
    border: 0;
    padding: 0;
}

.library-search input::placeholder {
    color: #666;
}

.search-icon {
    width: 17px;
    height: 17px;
}

.vm-tree {
    flex: 1;
    margin-top: 9px;
    padding-top: 1px;
    background: #fff;
    border: 1px solid #8a8e95;
    font-size: 16px;
}

.vm-tree li {
    display: flex;
    align-items: center;
    height: 22px;
    padding-left: 51px;
}

.vm-tree li svg {
    width: 18px;
    height: 18px;
}

.vm-tree li span:last-child {
    margin-left: 4px;
    padding: 0 2px;
}

.vm-tree .root {
    padding-left: 8px;
    font-size: 15px;
}

.vm-tree .root svg {
    margin-left: 9px;
}

.vm-tree .shared {
    padding-left: 28px;
    font-size: 15px;
}

.vm-tree .selected span {
    background: #f0f0f0;
}

.minus-box {
    width: 11px;
    height: 11px;
    border: 1px solid #919191;
    background: linear-gradient(#4a62a8, #4a62a8) center / 5px 1px no-repeat;
}

/* Console */
.console {
    flex: 1;
    min-width: 0;
    display: flex;
    flex-direction: column;
    border: 1px solid #606266;
}

.vm-tabs {
    flex: none;
    display: flex;
    gap: 6px;
    height: 41px;
    padding: 7px 0 0 4px;
    font-size: 13px;
}

.vm-tab {
    display: flex;
    align-items: center;
    padding: 0 7px 2px 6px;
    background: #e9eaec;
    border: 1px solid #a9abae;
    border-bottom: 0;
    border-radius: 5px 5px 0 0;
}

.vm-tab svg {
    width: 18px;
    height: 18px;
}

.vm-tab span {
    margin: 0 16px 0 6px;
}

.vm-tab.home span {
    margin-right: 14px;
    font-size: 15px;
}

.vm-tab .x {
    width: 12px;
    height: 12px;
    stroke: #b5b5b5;
    stroke-width: 1.5;
}

.vm-tab.active {
    background: #fff;
    font-weight: bold;
    font-size: 14px;
}

.vm-tab.active span {
    margin-right: 14px;
}

.guest {
    flex: 1;
    min-height: 0;
    display: flex;
    flex-direction: column;
    background: #000;
    padding: 35px 0 31px 1px;
}

.ie {
    flex: 1;
    min-height: 0;
    display: flex;
    flex-direction: column;
    padding: 0 0 6px 7px;
    background: var(--cyan);
    border-bottom: 1px solid #20455a;
}

.ie-buttons {
    flex: none;
    display: flex;
    justify-content: flex-end;
    height: 21px;
}

.ie-buttons button {
    width: 28px;
    display: grid;
    place-items: center;
    border: 1px solid #2a3b42;
    border-top: 0;
}

.ie-buttons button + button {
    width: 20px;
    padding-left: 5px;
    border-left: 0;
    border-right: 0;
}

.ie-min {
    width: 10px;
    height: 3px;
    background: #000;
}

.ie-max {
    width: 10px;
    height: 8px;
    border: 2px solid #000;
}

.ie-bar {
    flex: none;
    display: flex;
    align-items: flex-end;
    height: 33px;
    overflow: hidden;
    border-bottom: 1px solid #7799b9;
    font-size: 12px;
}

.ie-back {
    align-self: flex-start;
    margin-left: 1px;
}

.ie-back svg {
    width: 38px;
    height: 38px;
}

.ie-forward {
    align-self: flex-start;
    margin: 4px 3px 0;
}

.ie-forward svg {
    width: 26px;
    height: 26px;
}

.address {
    display: flex;
    align-items: center;
    width: 457px;
    height: 24px;
    margin: 0 3px 3px 0;
    padding: 0 3px;
    background: #b388a5;
    border: 1px solid #3f93ad;
    box-shadow: inset 0 0 0 1px #d9596f;
}

.fav {
    width: 16px;
    height: 16px;
}

.url {
    margin-left: 5px;
    color: #6f5a6b;
    white-space: nowrap;
}

.url b {
    font-weight: normal;
    color: #000;
}

.address-search {
    width: 13px;
    height: 13px;
    margin: 0 6px 0 auto;
    color: #5e5060;
}

.shield {
    width: 11px;
    height: 13px;
    margin: 0 6px 0 11px;
}

.reload {
    width: 12px;
    height: 12px;
    margin: 0 1px 0 6px;
}

.ie-tab {
    display: flex;
    align-items: center;
    width: 201px;
    height: 28px;
    padding: 2px 5px 0;
    background: #84b5d7;
    border: 1px solid #468fa9;
    border-bottom: 0;
    color: #222;
}

.ie-tab + .ie-tab {
    border-left: 0;
}

.ie-tab.active {
    background: #d9ebfb;
}

.ie-tab span {
    margin-left: 4px;
}

.ie-tab button {
    margin-left: auto;
    color: #888;
}

.ie-newtab {
    width: 26px;
    height: 28px;
    background: #9fc6d5;
    border: 1px solid #468fa9;
    border-width: 1px 1px 0 0;
}

.ie-home {
    width: 17px;
    height: 17px;
    margin: 0 7px 7px auto;
}

/* Controller page */
.page {
    position: relative;
    flex: 1;
    min-height: 0;
    display: flex;
    flex-direction: column;
    overflow: hidden;
    background: var(--page);
    color: #777;
    font: 12px/18px var(--page-font);
}

.ac-header {
    position: relative;
    flex: none;
    display: flex;
    align-items: center;
    height: 46px;
    padding: 2px 0 0 16px;
    background: #e6e6e6;
    box-shadow: 0 2px 10px rgba(0, 0, 0, 0.2);
}

.cloud {
    width: 48px;
    height: 32px;
}

.brand {
    width: 184px;
    margin-left: 8px;
    color: #858585;
    font-size: 16px;
    line-height: 17px;
}

.brand span, .brand strong {
    display: block;
}

.brand strong {
    font-size: 14px;
}

.ac-nav {
    display: flex;
    padding-top: 4px;
    font-size: 16px;
    color: #6c6c6c;
}

.ac-nav a {
    width: 82px;
    padding-left: 8px;
    white-space: nowrap;
}

.ac-nav svg {
    width: 16px;
    height: 16px;
}

.ac-nav .on {
    color: var(--blue);
}

.alarms {
    display: flex;
    align-items: center;
    margin-left: auto;
    color: #666;
}

.alarms span {
    display: flex;
    align-items: center;
    gap: 3px;
    width: 51px;
}

.alarms svg, .header-tools svg {
    width: 16px;
    height: 16px;
}

.user, .header-tools, .help {
    display: flex;
    align-items: center;
    height: 20px;
    border-left: 1px solid var(--line);
}

.user {
    gap: 15px;
    margin-left: 20px;
    padding: 0 8px 0 16px;
    color: #666;
}

.user svg {
    width: 18px;
    height: 16px;
}

.header-tools {
    gap: 10px;
    padding: 0 11px;
}

.help {
    width: 42px;
    padding-left: 12px;
    color: var(--blue);
    font-size: 18px;
    font-weight: bold;
}

.ac-body {
    flex: 1;
    min-height: 0;
    display: flex;
    margin-bottom: 2px;
    padding-left: 15px;
    border-bottom: 1px solid var(--line);
}

.ac-side {
    flex: none;
    width: 216px;
    border: 1px solid #d6d6d6;
    border-width: 0 1px;
}

.side-title {
    display: flex;
    align-items: center;
    height: 44px;
    padding: 7px 3px 0 19px;
    border-bottom: 1px solid var(--line);
    font-size: 16px;
    color: #8a8a8a;
}

.side-title svg {
    width: 16px;
    height: 16px;
}

.side-title span {
    margin-left: 5px;
}

.side-title .fold {
    width: 10px;
    height: 10px;
    margin-left: auto;
}

.ac-side a {
    display: flex;
    align-items: center;
    height: 43px;
    padding-left: 40px;
    border-bottom: 1px solid var(--line);
    font-size: 14px;
    color: #999;
}

.ac-side a.on {
    padding-left: 37px;
    border-left: 3px solid #85cdea;
    color: var(--blue);
}

.ac-content {
    flex: 1;
    min-width: 0;
    display: flex;
    flex-direction: column;
    padding-left: 20px;
}

.crumbs {
    flex: none;
    height: 44px;
    padding-top: 17px;
    border-bottom: 1px solid var(--line);
    color: #aaa;
}

.split {
    flex: 1;
    min-height: 0;
    display: flex;
}

.groups {
    flex: none;
    width: 200px;
    padding-left: 5px;
    border-right: 1px solid var(--line);
}

.groups-title {
    display: flex;
    align-items: center;
    gap: 9px;
    height: 32px;
    margin-right: 5px;
    padding: 1px 5px 0 0;
    border-bottom: 1px solid #c8c8c8;
    color: #666;
}

.groups-title span {
    margin-right: auto;
}

.groups-title svg {
    width: 14px;
    height: 14px;
}

.find {
    display: flex;
    align-items: center;
    height: 26px;
    padding: 0 5px 0 7px;
    border: 1px solid #d5d5d5;
    border-radius: 4px;
    background: #e5e5e5;
}

.find input {
    flex: 1;
    min-width: 0;
    padding: 0;
    border: 0;
    background: none;
}

.find input::placeholder {
    color: #a3a3a3;
}

.find svg {
    width: 14px;
    height: 14px;
    color: var(--blue);
}

.groups .find {
    margin: 4px 8px 14px 4px;
}

.all-devices {
    display: flex;
    align-items: center;
    gap: 2px;
    height: 26px;
    padding-left: 19px;
    background: #dadada;
    font-size: 11px;
}

.all-devices svg, .group-tree svg {
    width: 16px;
    height: 16px;
}

.group-tree {
    display: grid;
    grid-template-rows: repeat(7, 1fr);
    height: 178px;
    font-size: 11px;
}

.group-tree li {
    display: flex;
    align-items: center;
    gap: 2px;
    padding-left: 35px;
    white-space: nowrap;
}

.group-tree .top {
    padding-left: 5px;
}

.group-tree .closed {
    padding-left: 21px;
}

.fold-box {
    width: 9px;
    height: 9px;
    margin-right: 3px;
    border-radius: 2px;
    background: #bdbdbd;
    color: #eee;
    font: bold 10px/9px var(--page-font);
    text-align: center;
}

.top .fold-box {
    background: var(--blue);
}

.devices {
    flex: 1;
    min-width: 0;
    display: flex;
    flex-direction: column;
    padding-left: 5px;
}

.device-tools {
    flex: none;
    display: flex;
    gap: 5px;
    height: 46px;
    padding: 11px 0 0 1px;
    overflow: hidden;
}

.device-tools button {
    flex: none;
    width: 64px;
    height: 26px;
    border: 1px solid #d4d4d4;
    border-radius: 7px;
    background: #e4e4e4;
    color: #858585;
}

.device-tools .on {
    color: var(--blue);
}

.device-tools .find {
    width: 142px;
    margin-left: auto;
}

.device-tools .advanced {
    width: 84px;
    margin-right: -31px;
}

.device-table {
    width: 100%;
    table-layout: fixed;
    border-collapse: collapse;
}

.device-table th, .device-table td {
    padding: 0 0 0 6px;
    border-bottom: 1px solid var(--line);
    text-align: left;
    font-weight: normal;
    white-space: nowrap;
}

.device-table th {
    height: 24px;
    border-top: 1px solid var(--line);
    background: linear-gradient(#c8c8c8, #c8c8c8) 0 center / 1px 15px no-repeat #dcdcdc;
    color: #888;
}

.device-table td {
    height: 31px;
    color: #6a6a6a;
}

.device-table .c-num, .device-table .c-check {
    background: #dcdcdc;
}

.device-table .num {
    padding-left: 17px;
}

.device-table th:nth-child(2), .device-table td:nth-child(2) {
    padding-left: 1px;
}

.c-num { width: 34px; }
.c-check { width: 19px; }
.c-state { width: 64px; }
.c-name { width: 110px; }
.c-mid { width: 91px; }
.c-wide { width: 138px; }

.device-table input {
    appearance: none;
    display: block;
    width: 14px;
    height: 14px;
    border: 1px solid #c9c9c9;
    background: #e6e6e6;
}

.online {
    display: block;
    width: 14px;
    height: 14px;
    margin-left: 2px;
    border: 1px solid #8db791;
    border-radius: 50%;
    background: #93cf78;
}

.ops {
    display: flex;
    gap: 6px;
}

.ops svg {
    width: 15px;
    height: 15px;
}

.pager {
    flex: none;
    display: flex;
    align-items: center;
    height: 35px;
    margin-top: auto;
    padding-left: 4px;
    border-top: 1px solid #c8c8c8;
    color: #999;
    white-space: nowrap;
}

/* Drop-down with a split arrow */
.pick {
    position: relative;
}

.pick select {
    appearance: none;
    display: block;
    width: 100%;
    height: 26px;
    padding: 0 0 0 8px;
    border: 1px solid var(--field-line);
    border-radius: 4px;
    background: linear-gradient(var(--field-line), var(--field-line)) right 24px top / 1px 100% no-repeat #fff;
}

.pick::after {
    content: "";
    position: absolute;
    right: 7px;
    top: 11px;
    border: 5px solid transparent;
    border-top-color: #aaa;
    border-bottom: 0;
}

.size {
    width: 57px;
}

.size select {
    background-color: #e4e4e4;
    border-color: #d2d2d2;
}

.total {
    margin: 0 20px 0 6px;
}

.pager button {
    width: 28px;
    height: 26px;
    border: 1px solid #d4d4d4;
    border-radius: 4px;
    display: grid;
    place-items: center;
}

.pager button svg {
    width: 8px;
    height: 14px;
    fill: none;
    stroke: #bbb;
}

.pager .current {
    width: 25px;
    margin: 0 5px;
    background: #6cbadb;
    border-color: #5daed2;
    border-radius: 2px;
    color: #eee;
}

.jump {
    margin-left: 20px;
}

/* Edit dialog */
.dialog {
    position: absolute;
    top: 184px;
    right: 347px;
    bottom: 0;
    width: 550px;
    overflow: hidden;
    border-radius: 6px 6px 0 0;
    background: #fafafa;
    box-shadow: 0 0 3px rgba(0, 0, 0, 0.3);
    color: #666;
}

.dialog-head {
    display: flex;
    align-items: center;
    justify-content: space-between;
    height: 36px;
    padding: 2px 17px 0 20px;
    background: linear-gradient(#fefefe, #ececec);
}

.dialog-head h2 {
    color: #333;
    font-size: 14px;
    font-weight: bold;
}

.dialog-head svg {
    width: 12px;
    height: 12px;
}

.fields {
    display: grid;
    grid-template-columns: 144px 230px;
    row-gap: 4px;
    align-items: start;
}

.base {
    padding: 20px 0 0 21px;
}

.fields label {
    display: flex;
    padding-top: 4px;
}

.fields em {
    width: 7px;
    color: #e22;
    font-style: normal;
    line-height: 14px;
}

.fields input {
    display: block;
    width: 100%;
    height: 26px;
    padding: 0 6px;
    border: 1px solid var(--field-line);
    border-radius: 4px;
    background: #fff;
    color: #000;
}

.fields input[type="password"] {
    padding: 0 5px;
    font: 20px/24px var(--page-font);
}

.fields div {
    position: relative;
}

.hint, .info {
    display: grid;
    place-items: center;
    width: 14px;
    height: 14px;
    border-radius: 50%;
    background: #1ca4ea;
    color: #fff;
    font: bold 12px/14px var(--page-font);
}

.hint {
    position: absolute;
    left: 231px;
    top: 6px;
}

.area textarea {
    display: block;
    width: 100%;
    height: 60px;
    resize: none;
    border: 1px solid var(--field-line);
    border-radius: 4px;
    background: #fff;
}

.fields .area-scroll {
    position: absolute;
    right: 1px;
    top: 1px;
    width: 18px;
    height: 58px;
    display: flex;
    flex-direction: column;
    align-items: center;
    justify-content: center;
    gap: 14px;
    background: #f6f6f6;
}

.area-scroll svg {
    width: 12px;
    height: 9px;
    fill: none;
    stroke: #bbb;
    stroke-width: 2;
}

.dialog-tabs {
    display: flex;
    gap: 2px;
    height: 31px;
    margin-top: 24px;
    padding-left: 30px;
    font-size: 14px;
}

.dialog-tabs button {
    margin-top: 1px;
    padding: 4px 13px 0;
    border: 1px solid #dfdfdf;
    border-radius: 6px 6px 0 0;
    background: #f3f3f3;
}

.dialog-tabs .on {
    margin-top: 0;
    padding-top: 2px;
    border-top: 3px solid #46c3fb;
    border-bottom: 0;
    background: #fafafa;
    color: #1ca0e8;
}

.tab-panel {
    height: 375px;
    margin: 0 20px;
    padding: 12px 0 0 6px;
    border: 1px solid #c9c9c9;
    border-top: 0;
    color: #000;
}

.notice {
    display: flex;
    width: 452px;
    height: 35px;
    margin-left: 5px;
    padding: 4px 6px;
    gap: 6px;
    border: 1px solid #e0e0e0;
    background: #fff;
}

.info {
    margin-top: 2px;
    background: #04a7fb;
}

.enable {
    display: flex;
    gap: 5px;
    height: 28px;
    padding-top: 5px;
}

.enable input {
    appearance: none;
    width: 14px;
    height: 14px;
    margin-top: 5px;
    border: 1px solid #40bdf4;
    background: #d5effc;
    display: grid;
    place-items: center;
}

.enable input:checked::after {
    content: "✔";
    color: #26b2f2;
    font: 12px/12px "DejaVu Sans", sans-serif;
}

.snmp {
    padding-left: 1px;
}

.snmp label {
    color: #111;
}

.snmp select {
    color: #333;
}

/* Windows activation notice */
.activate {
    position: absolute;
    right: 16px;
    bottom: 15px;
    color: #b0b0b0;
    font: 15px/24px var(--ui-font);
    white-space: nowrap;
}

.activate-big {
    font-size: 21px;
    line-height: 24px;
}

.page-scroll, .outer-scroll {
    flex: none;
    display: flex;
    align-items: center;
    background: #f0f0f0;
}

.page-scroll {
    height: 17px;
    padding: 1px 17px 1px 18px;
}

.outer-scroll {
    height: 21px;
    padding: 1px 6px 0 5px;
}

.page-scroll svg, .outer-scroll svg {
    width: 8px;
    height: 12px;
    fill: none;
    stroke: #555;
    stroke-width: 2;
}

.thumb {
    flex: 1;
    align-self: stretch;
    margin-left: 8px;
    background: #cdcdcd;
}

.outer-scroll .thumb {
    margin-right: 62px;
}

/* Guest taskbar */
.guest-taskbar {
    flex: none;
    display: flex;
    height: 41px;
    background: var(--cyan);
    border-top: 2px solid #5b6a70;
    border-bottom: 1px solid #5b6a70;
    overflow: hidden;
}

.guest-taskbar button {
    display: grid;
    place-items: center;
    width: 62px;
}

.guest-taskbar button:first-child {
    width: 49px;
}

.guest-taskbar button svg {
    width: 30px;
    height: 30px;
}

.guest-taskbar .running {
    width: 60px;
    margin-left: 1px;
    padding-right: 4px;
    background: linear-gradient(#2d6377, #2d6377) right 4px top / 1px 100% no-repeat #9fdcf2;
    border: 1px solid #2d6377;
    border-width: 0 1px;
}

.guest-tray {
    display: flex;
    align-items: center;
    gap: 8px;
    margin-left: auto;
    margin-right: -39px;
}

.guest-tray svg {
    width: 16px;
    height: 16px;
}

.ime {
    color: #fff;
    text-shadow: 0 0 1px #000, 0 0 1px #000, 0 0 1px #000;
}

.guest-tray .ime {
    margin-left: 3px;
}

.guest-date {
    margin-left: 3px;
    font-size: 12px;
    line-height: 18px;
    text-align: center;
}

/* Host status and taskbar */
.status-bar {
    flex: none;
    display: flex;
    align-items: center;
    height: 25px;
    padding: 0 22px 0 1px;
}

.status-icons {
    display: flex;
    align-items: center;
    gap: 5px;
    margin-left: auto;
}

.status-icons svg {
    width: 20px;
    height: 18px;
}

.status-line {
    width: 2px;
    height: 20px;
    margin: 0 4px 0 3px;
    border-left: 1px solid #aaa;
    background: #fff;
}

.taskbar {
    flex: none;
    display: flex;
    height: 50px;
    background: linear-gradient(90deg, #d6d5df, #d3d3da 35%, #d6d5d2 60%, #d5d6d8);
}

.tasks {
    display: flex;
}

.task {
    display: grid;
    place-items: center;
    position: relative;
    width: 62px;
}

.task svg {
    width: 30px;
    height: 30px;
}

.task.open::after {
    content: "";
    position: absolute;
    left: 6px;
    right: 5px;
    bottom: 0;
    height: 3px;
    background: #0078d7;
}

.task.many::after {
    background: linear-gradient(90deg, #0078d7 80%, #62a9e4 80%);
}

.word-letter {
    fill: #fff;
    font: bold 13px var(--page-font);
}

.tray {
    position: relative;
    display: flex;
    align-items: center;
    gap: 10px;
    margin-left: auto;
    padding-right: 5px;
}

.tray > svg {
    width: 20px;
    height: 20px;
}

.tray .ime {
    width: 20px;
    margin-left: 8px;
    font-size: 18px;
}

.clock {
    display: flex;
    flex-direction: column;
    align-items: center;
    width: 80px;
    font-size: 16px;
    line-height: 23px;
}

.notify {
    padding: 0 15px 0 11px;
    height: 100%;
    border-right: 1px solid #aaa;
}

.notify svg {
    width: 32px;
    height: 32px;
}

.notify-count {
    font: bold 14px var(--page-font);
}

.lab-mark {
    position: absolute;
    right: 6px;
    top: 8px;
    display: flex;
    align-items: center;
    gap: 7px;
    color: #7481b4;
    font: bold 29px/36px var(--ui-font);
    opacity: 0.6;
    pointer-events: none;
}

.lab-mark svg {
    width: 44px;
    height: 36px;
}
```
